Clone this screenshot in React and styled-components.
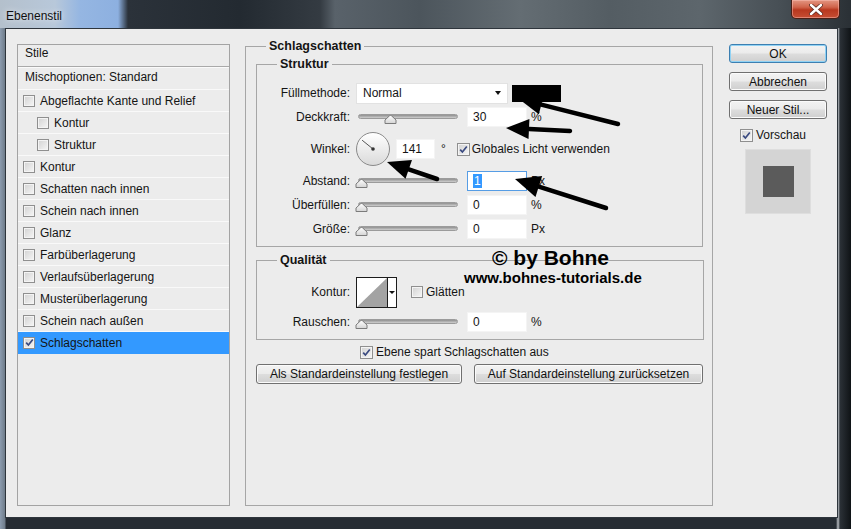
import React from "react";
import styled, { createGlobalStyle } from "styled-components";

const GlobalStyle = createGlobalStyle`
  html, body { margin: 0; padding: 0; background: #1b2025; }
  body {
    font-family: "Liberation Sans", Arial, sans-serif;
    font-size: 12px;
    color: #141414;
  }
  * { box-sizing: border-box; }
`;

const Window = styled.div`
  position: relative;
  width: 851px;
  height: 529px;
  overflow: hidden;
  display: flex;
  flex-direction: column;
  background: linear-gradient(to right, #8c9caf 0, #6f7c8a 5px, #262c33 6px, #262c33 836px, #b9bec3 838px, #2b3137 840px, #0f1316 851px);
  .frame-bottom {
    height: 11px;
    flex-shrink: 0;
  }
`;

const TitleBar = styled.div`
  height: 28px;
  flex-shrink: 0;
  display: flex;
  justify-content: space-between;
  align-items: flex-start;
  padding-left: 6px;
  background: linear-gradient(
    to right,
    #b4c0cc 0,
    #b8c8da 55px,
    #95b6e2 80px,
    #8db0e0 118px,
    #2b323a 128px,
    #232a31 240px,
    #343b42 320px,
    #59626a 335px,
    #4c555c 420px,
    #646d73 520px,
    #545d63 610px,
    #5d666c 700px,
    #474f55 780px,
    #2a3035 851px
  );
`;

const TitleText = styled.span`
  margin-top: 9px;
  font-size: 12px;
  color: #101010;
  text-shadow: 0 0 6px rgba(255, 255, 255, 0.9);
`;

const CloseButton = styled.div`
  width: 49px;
  height: 19px;
  margin-right: 11px;
  border: 1px solid #4a1f15;
  border-top: none;
  border-radius: 0 0 5px 5px;
  background: linear-gradient(#e39682 0, #d0634a 40%, #b8381f 55%, #c64e33 100%);
  box-shadow: inset 0 0 0 1px rgba(255, 200, 190, 0.45);
  display: flex;
  align-items: center;
  justify-content: center;
`;

const Client = styled.div`
  flex: 1;
  margin: 0 13px 0 5px;
  background: #ececec;
  border: 1px solid #2e353c;
  display: flex;
  align-items: flex-start;
  padding: 15px 10px 11px 11px;
`;

/* ---------- left style list ---------- */

const StyleList = styled.div`
  width: 213px;
  height: 462px;
  border: 1px solid #a3a3a3;
  background: #ececec;
  display: flex;
  flex-direction: column;
`;

const ListHeader = styled.div`
  height: 22px;
  padding: 1px 0 0 7px;
  border-bottom: 1px solid #a9a9a9;
  box-shadow: 0 1px 0 #fafafa;
  margin-bottom: 1px;
  line-height: 15px;
`;

const ListItem = styled.div`
  height: 22px;
  display: flex;
  align-items: center;
  gap: 5px;
  padding-left: ${(p) => (p.$plain ? 7 : p.$indent ? 19 : 5)}px;
  padding-bottom: ${(p) => (p.$plain ? 3 : 0)}px;
  border-bottom: 1px solid ${(p) => (p.$selected ? "#3399ff" : "#f9f9f9")};
  background: ${(p) => (p.$selected ? "#3399ff" : "transparent")};
`;

/* ---------- shared controls ---------- */

const Box = styled.span`
  width: ${(p) => p.$size || 13}px;
  height: ${(p) => p.$size || 13}px;
  flex-shrink: 0;
  border: 1px solid #8f8f8f;
  background: linear-gradient(135deg, #d2d2d2, #f6f6f6);
  box-shadow: inset 0 0 0 1px #f4f4f4;
  display: flex;
  align-items: center;
  justify-content: center;
`;

const CheckBox = ({ checked, size }) => (
  <Box $size={size}>
    {checked && (
      <svg width="9" height="9" viewBox="0 0 9 9">
        <path d="M1.2 4.6 L3.4 7 L7.8 1.5" fill="none" stroke="#3a4a80" strokeWidth="1.7" />
      </svg>
    )}
  </Box>
);

const PushButton = styled.div`
  width: ${(p) => p.$w}px;
  height: ${(p) => p.$h || 20}px;
  border: 1px solid ${(p) => (p.$focus ? "#3c7fb1" : "#707070")};
  border-radius: 3px;
  background: linear-gradient(#f3f3f3 0, #ebebeb 48%, #dddddd 52%, #cfcfcf 100%);
  box-shadow: ${(p) => (p.$focus ? "inset 0 0 0 1px #90d2f4" : "inset 0 0 0 1px #fbfbfb")};
  display: flex;
  align-items: center;
  justify-content: center;
  font-size: 12px;
  color: #111;
  flex-shrink: 0;
`;

/* ---------- main panel ---------- */

const Group = styled.div`
  border: 1px solid #a6a6a6;
  margin: ${(p) => p.$margin || "0"};
  padding-bottom: ${(p) => p.$pb || 0}px;
`;

const GroupTitle = styled.div`
  width: max-content;
  height: 15px;
  margin: -8px 0 0 20px;
  padding: 0 3px;
  background: #ececec;
  font-weight: bold;
  font-size: 12.5px;
  line-height: 15px;
  color: #141414;
`;

const Rows = styled.div`
  padding-top: ${(p) => p.$pt || 8}px;
  display: flex;
  flex-direction: column;
  gap: ${(p) => p.$gap || 0}px;
`;

const FormRow = styled.div`
  height: ${(p) => p.$h || 24}px;
  display: flex;
  align-items: center;
`;

const Label = styled.span`
  width: 93px;
  text-align: right;
  margin-right: ${(p) => p.$mr ?? 6}px;
  flex-shrink: 0;
`;

const Select = styled.div`
  width: 152px;
  height: 21px;
  background: #fff;
  border: 1px solid #e2e2e2;
  display: flex;
  align-items: center;
  justify-content: space-between;
  padding: 0 6px 0 6px;
  &::after {
    content: "";
    border-left: 3.5px solid transparent;
    border-right: 3.5px solid transparent;
    border-top: 4px solid #111;
  }
`;

const Swatch = styled.div`
  width: 49px;
  height: 17px;
  margin-left: 4px;
  background: #000;
`;

const SliderWrap = styled.div`
  position: relative;
  width: 106px;
  height: 14px;
  flex-shrink: 0;
`;

const Track = styled.div`
  margin: 4px 3px 0;
  height: 5px;
  border-radius: 3px;
  border: 1px solid #9b9b9b;
  background: linear-gradient(#8f8f8f, #cfcfcf);
`;

const Thumb = styled.svg`
  position: absolute;
  top: 5px;
`;

const Slider = ({ value }) => (
  <SliderWrap>
    <Track />
    <Thumb width="13" height="9" viewBox="0 0 13 9" style={{ left: `${value - 3}px` }}>
      <defs>
        <linearGradient id="tg" x1="0" y1="0" x2="0" y2="1">
          <stop offset="0" stopColor="#ffffff" />
          <stop offset="1" stopColor="#d4d4d4" />
        </linearGradient>
      </defs>
      <path d="M1 5 L5.5 0.8 Q6.5 0 7.5 0.8 L12 5 L12 8.5 L1 8.5 Z" fill="url(#tg)" stroke="#7b7b7b" strokeWidth="1" />
    </Thumb>
  </SliderWrap>
);

const Field = styled.div`
  width: ${(p) => p.$w || 60}px;
  height: 20px;
  margin-left: ${(p) => p.$ml ?? 6}px;
  background: #fff;
  border: 1px solid ${(p) => (p.$active ? "#569de5" : "#f4f4f4")};
  display: flex;
  align-items: center;
  padding-left: 5px;
  flex-shrink: 0;
`;

const Selected = styled.span`
  background: #3399ff;
  color: #fff;
  padding: 0 1px;
  line-height: 14px;
`;

const Unit = styled.span`
  margin-left: ${(p) => p.$ml ?? 4}px;
`;

const Dial = styled.div`
  width: 34px;
  height: 34px;
  border-radius: 50%;
  border: 1px solid #8a8a8a;
  background: linear-gradient(#ffffff, #dadada);
  flex-shrink: 0;
`;

const Inline = styled.div`
  display: flex;
  align-items: center;
  gap: ${(p) => p.$gap || 4}px;
  margin-left: ${(p) => p.$ml || 0}px;
`;

const ContourBox = styled.div`
  width: 41px;
  height: 31px;
  border: 1px solid #1c1c1c;
  display: flex;
  background: #fff;
  flex-shrink: 0;
  .arrow {
    flex: 1;
    border-left: 1px solid #1c1c1c;
    display: flex;
    align-items: center;
    justify-content: center;
  }
  .arrow::after {
    content: "";
    border-left: 3px solid transparent;
    border-right: 3px solid transparent;
    border-top: 3px solid #111;
  }
`;

const MainPanel = styled.div`
  width: 468px;
  height: 460px;
  margin: 2px 0 0 15px;
  border: 1px solid #a6a6a6;
`;

const CheckRow = styled.div`
  height: 20px;
  margin-top: 2px;
  padding-left: 114px;
  display: flex;
  align-items: center;
  gap: 3px;
`;

const ButtonRow = styled.div`
  display: flex;
  gap: 12px;
  padding-left: 10px;
  margin-top: 2px;
`;

/* ---------- right column ---------- */

const SideColumn = styled.div`
  width: 98px;
  margin-left: 16px;
  display: flex;
  flex-direction: column;
  gap: 9px;
`;

const Preview = styled.div`
  width: 66px;
  height: 65px;
  margin: -2px 0 0 16px;
  background: #d4d4d4;
  border: 1px solid #dedede;
  display: flex;
  align-items: center;
  justify-content: center;
  &::after {
    content: "";
    width: 31px;
    height: 31px;
    background: #5b5b5b;
  }
`;

/* ---------- annotations laid over the dialog ---------- */

const Watermark = styled.div`
  position: absolute;
  left: ${(p) => p.$x}px;
  top: ${(p) => p.$y}px;
  font-family: "Liberation Sans", Arial, sans-serif;
  font-weight: bold;
  font-size: ${(p) => p.$size}px;
  line-height: 1;
  color: #000;
  white-space: nowrap;
`;

const ArrowLayer = styled.svg`
  position: absolute;
  left: 0;
  top: 0;
  pointer-events: none;
`;

const Arrow = ({ tip, tail, head = 23, wide = 10 }) => {
  const [tx, ty] = tip;
  const [sx, sy] = tail;
  const len = Math.hypot(sx - tx, sy - ty);
  const ux = (sx - tx) / len;
  const uy = (sy - ty) / len;
  const bx = tx + ux * head;
  const by = ty + uy * head;
  const p1 = `${bx - uy * wide},${by + ux * wide}`;
  const p2 = `${bx + uy * wide},${by - ux * wide}`;
  return (
    <g>
      <line x1={bx} y1={by} x2={sx} y2={sy} stroke="#000" strokeWidth="4.5" strokeLinecap="round" />
      <polygon points={`${tx},${ty} ${p1} ${p2}`} fill="#000" />
    </g>
  );
};

const styles = [
  { t: "Abgeflachte Kante und Relief" },
  { t: "Kontur", indent: true },
  { t: "Struktur", indent: true },
  { t: "Kontur" },
  { t: "Schatten nach innen" },
  { t: "Schein nach innen" },
  { t: "Glanz" },
  { t: "Farbüberlagerung" },
  { t: "Verlaufsüberlagerung" },
  { t: "Musterüberlagerung" },
  { t: "Schein nach außen" },
  { t: "Schlagschatten", selected: true },
];

export default function App() {
  const angle = (141 * Math.PI) / 180;
  return (
    <>
      <GlobalStyle />
      <Window>
        <TitleBar>
          <TitleText>Ebenenstil</TitleText>
          <CloseButton>
            <svg width="14" height="11" viewBox="0 0 14 11">
              <path d="M2 1 L12 10 M12 1 L2 10" stroke="#5a2a20" strokeWidth="4" strokeLinecap="round" />
              <path d="M2 1 L12 10 M12 1 L2 10" stroke="#ffffff" strokeWidth="2.4" strokeLinecap="round" />
            </svg>
          </CloseButton>
        </TitleBar>

        <Client>
          <StyleList>
            <ListHeader>Stile</ListHeader>
            <ListItem $plain>Mischoptionen: Standard</ListItem>
            {styles.map((s, i) => (
              <ListItem key={i} $indent={s.indent} $selected={s.selected}>
                <CheckBox size={12} checked={s.selected} />
                <span>{s.t}</span>
              </ListItem>
            ))}
          </StyleList>

          <MainPanel>
            <GroupTitle>Schlagschatten</GroupTitle>

            <Group $margin="10px 9px 0 10px" $pb={5}>
              <GroupTitle>Struktur</GroupTitle>
              <Rows $pt={9}>
                <FormRow>
                  <Label>Füllmethode:</Label>
                  <Select>Normal</Select>
                  <Swatch />
                </FormRow>
                <FormRow>
                  <Label $mr={5}>Deckkraft:</Label>
                  <Slider value={32} />
                  <Field>30</Field>
                  <Unit>%</Unit>
                </FormRow>
                <FormRow $h={40}>
                  <Label>Winkel:</Label>
                  <Dial>
                    <svg width="32" height="32" viewBox="0 0 32 32">
                      <line
                        x1="16"
                        y1="16"
                        x2={16 + Math.cos(angle) * 14}
                        y2={16 - Math.sin(angle) * 14}
                        stroke="#555"
                        strokeWidth="1"
                      />
                      <circle cx="16" cy="16" r="1.8" fill="#333" />
                    </svg>
                  </Dial>
                  <Field $w={39}>141</Field>
                  <Unit $ml={6}>°</Unit>
                  <Inline $ml={11} $gap={2}>
                    <CheckBox checked />
                    <span>Globales Licht verwenden</span>
                  </Inline>
                </FormRow>
                <FormRow>
                  <Label $mr={5}>Abstand:</Label>
                  <Slider value={3} />
                  <Field $active>
                    <Selected>1</Selected>
                  </Field>
                  <Unit>Px</Unit>
                </FormRow>
                <FormRow>
                  <Label $mr={5}>Überfüllen:</Label>
                  <Slider value={3} />
                  <Field>0</Field>
                  <Unit>%</Unit>
                </FormRow>
                <FormRow>
                  <Label $mr={5}>Größe:</Label>
                  <Slider value={3} />
                  <Field>0</Field>
                  <Unit>Px</Unit>
                </FormRow>
              </Rows>
            </Group>

            <Group $margin="13px 8px 0 10px" $pb={5}>
              <GroupTitle>Qualität</GroupTitle>
              <Rows $pt={8} $gap={2}>
                <FormRow $h={32}>
                  <Label>Kontur:</Label>
                  <ContourBox>
                    <svg width="30" height="29" viewBox="0 0 30 29">
                      <polygon points="0,29 30,0 30,29" fill="#a3a3a3" />
                    </svg>
                    <span className="arrow" />
                  </ContourBox>
                  <Inline $ml={14} $gap={3}>
                    <CheckBox size={12} />
                    <span>Glätten</span>
                  </Inline>
                </FormRow>
                <FormRow>
                  <Label $mr={5}>Rauschen:</Label>
                  <Slider value={3} />
                  <Field>0</Field>
                  <Unit>%</Unit>
                </FormRow>
              </Rows>
            </Group>

            <CheckRow>
              <CheckBox checked />
              <span>Ebene spart Schlagschatten aus</span>
            </CheckRow>

            <ButtonRow>
              <PushButton $w={206}>Als Standardeinstellung festlegen</PushButton>
              <PushButton $w={229}>Auf Standardeinstellung zurücksetzen</PushButton>
            </ButtonRow>
          </MainPanel>

          <SideColumn>
            <PushButton $w={98} $h={19} $focus>
              OK
            </PushButton>
            <PushButton $w={98} $h={19}>
              Abbrechen
            </PushButton>
            <PushButton $w={98} $h={19}>
              Neuer Stil...
            </PushButton>
            <Inline $ml={11} $gap={3}>
              <CheckBox checked />
              <span>Vorschau</span>
            </Inline>
            <Preview />
          </SideColumn>
        </Client>
        <div className="frame-bottom" />

        <Watermark $x={492} $y={247} $size={21}>
          © by Bohne
        </Watermark>
        <Watermark $x={464} $y={270} $size={15}>
          www.bohnes-tutorials.de
        </Watermark>

        <ArrowLayer width="851" height="529">
          <Arrow tip={[519, 99]} tail={[618, 124]} />
          <Arrow tip={[506, 128]} tail={[570, 131]} />
          <Arrow tip={[387, 162]} tail={[437, 179]} />
          <Arrow tip={[515, 179]} tail={[606, 208]} head={25} wide={11} />
        </ArrowLayer>
      </Window>
    </>
  );
}
